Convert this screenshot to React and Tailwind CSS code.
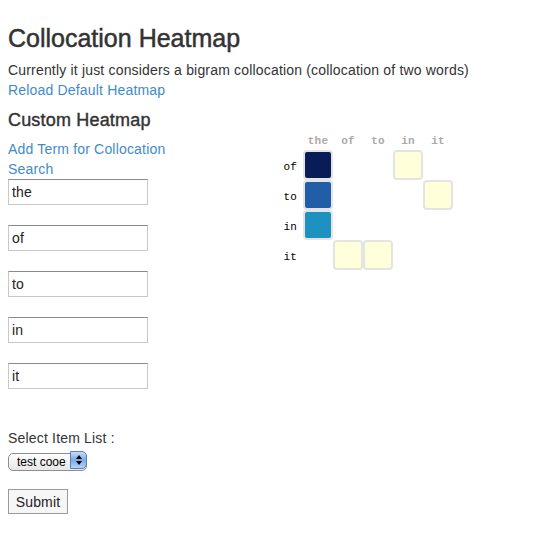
const terms = ["the", "of", "to", "in", "it"];

// [row, col, colour]
const cells = [
  [1, 0, "#081d58"],
  [2, 0, "#225ea8"],
  [3, 0, "#1d91c0"],
  [1, 3, "#ffffd9"],
  [2, 4, "#ffffd9"],
  [4, 1, "#ffffd9"],
  [4, 2, "#ffffd9"],
];

function Heatmap() {
  return (
    <svg width="200" height="150" className="block">
      {terms.map((t, i) => (
        <text
          key={t}
          x={40 + 30 * i}
          y={12}
          textAnchor="middle"
          fontFamily="Liberation Mono, monospace"
          fontSize="11"
          fontWeight="bold"
          fill="#aaaaaa"
        >
          {t}
        </text>
      ))}
      {terms.slice(1).map((t, i) => (
        <text
          key={t}
          x={19}
          y={38 + 30 * i}
          textAnchor="end"
          fontFamily="Liberation Mono, monospace"
          fontSize="11"
          fill="#000"
        >
          {t}
        </text>
      ))}
      {cells.map(([r, c, color]) => (
        <rect
          key={`${r}-${c}`}
          x={26 + 30 * c}
          y={19 + 30 * (r - 1)}
          width="28"
          height="28"
          rx="3"
          fill={color}
          stroke="#e4e4e4"
          strokeWidth="2"
        />
      ))}
    </svg>
  );
}

function TermInput({ value }) {
  return (
    <input
      defaultValue={value}
      className="block w-[140px] h-[26px] px-[3px] border border-[#c8c8c8] border-t-[#8a8a8a] bg-white text-[14px] text-[#222] outline-none"
    />
  );
}

export default function App() {
  return (
    <div className="px-2 font-['Liberation_Sans',Arial,sans-serif] text-[14px] leading-[20px] tracking-[0.18px] text-[#333] bg-white min-h-[545px]">
      <h2 className="pt-[23px] text-[25px] leading-[30px] font-normal tracking-normal text-[#333] [-webkit-text-stroke:0.5px_#333]">
        Collocation Heatmap
      </h2>
      <p className="mt-[7px]">
        Currently it just considers a bigram collocation (collocation of two words)
      </p>
      <a href="#" className="block text-[#428bca]">
        Reload Default Heatmap
      </a>
      <h3 className="mt-[8px] text-[18px] leading-[24px] text-[#333] [-webkit-text-stroke:0.4px_#333]">
        Custom Heatmap
      </h3>

      <div className="flex">
        <form className="w-[270px] pt-[7px]">
          <a href="#" className="block text-[#428bca]">
            Add Term for Collocation
          </a>
          <a href="#" className="block text-[#428bca]">
            Search
          </a>
          <div className="flex flex-col gap-[20px]">
            {terms.map((t) => (
              <TermInput key={t} value={t} />
            ))}
          </div>

          <div className="mt-[39px]">Select Item List :</div>
          <div className="relative mt-[3px] w-[79px] h-[18px]">
            <select className="appearance-none w-full h-full rounded-[5px] border border-[#8e8e8e] bg-gradient-to-b from-white to-[#e6e6e6] pl-[8px] text-[12px] leading-[16px] tracking-normal text-black">
              <option>test cooe</option>
            </select>
            <div className="pointer-events-none absolute right-0 top-0 h-[18px] w-[17px] rounded-r-[5px] border border-[#5a7fb8] bg-gradient-to-b from-[#c9dcf5] via-[#7aaae6] to-[#b6d3f6] flex flex-col items-center justify-center gap-[2px]">
              <span className="block w-0 h-0 border-x-[3px] border-x-transparent border-b-[4px] border-b-black" />
              <span className="block w-0 h-0 border-x-[3px] border-x-transparent border-t-[4px] border-t-black" />
            </div>
          </div>

          <button
            type="button"
            className="mt-[20px] w-[60px] h-[25px] border border-[#9a9a9a] bg-[#f6f6f6] text-[14px] text-[#222]"
          >
            Submit
          </button>
        </form>
        <Heatmap />
      </div>
    </div>
  );
}
